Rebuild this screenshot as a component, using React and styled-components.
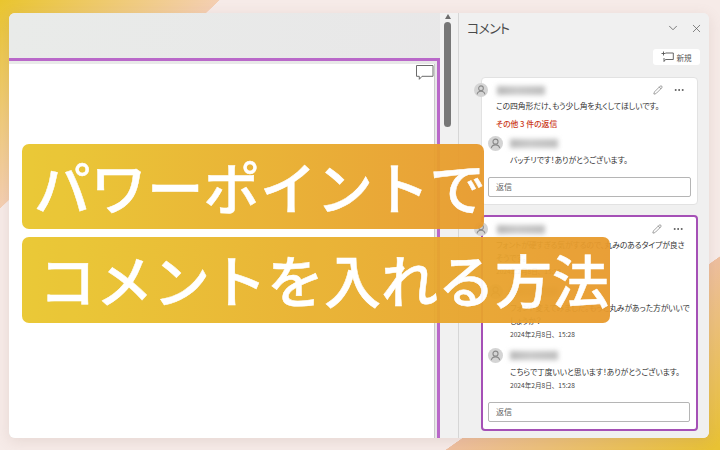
import React from "react";
import styled, { createGlobalStyle } from "styled-components";
import { ChevronDown, Ellipsis, Pencil, X } from "lucide-react";

const GlobalStyle = createGlobalStyle`
  * { box-sizing: border-box; }
  html, body { margin: 0; height: 100%; }
  body {
    overflow: hidden;
    font-family: "Noto Sans CJK JP", "Noto Sans", sans-serif;
    background:
      linear-gradient(136.5deg, #e9c52e 0, #f4cfb2 151px, transparent 151.5px),
      linear-gradient(324.8deg, #e8c231 0, #eebf9f 158px, transparent 158.5px),
      #f6ebe8;
  }
`;

const Page = styled.div`
  width: 720px;
  height: 450px;
  padding: 13px 11px 12px 9px;
`;

const Window = styled.div`
  position: relative;
  height: 100%;
  display: flex;
  border-radius: 6px;
  background: #f0f0f0;
  box-shadow: 0 3px 14px rgba(150, 110, 100, 0.16);
`;

const SlideArea = styled.div`
  width: 431px;
  display: flex;
  padding-top: 45px;
  border-radius: 6px 0 0 6px;
  background: linear-gradient(100deg, #e9ebe9, #e8e7e8);
`;

const SlideFrame = styled.div`
  flex: 1;
  display: flex;
  padding: 3px 2px 0 0;
  border-top: 3px solid #b968c9;
  border-right: 3px solid #b968c9;
`;

const SlideSheet = styled.div`
  flex: 1;
  display: flex;
  justify-content: flex-end;
  align-items: flex-start;
  padding-top: 1px;
  background: #fff;
  border-right: 1px solid #c9c9c9;
  border-radius: 0 0 0 6px;
`;

const ScrollRail = styled.div`
  width: 18px;
  display: flex;
  flex-direction: column;
  align-items: center;
  padding: 1px 3px 0 0;
  background: #f1f1f1;
`;

const ScrollArrow = styled.div`
  width: 0;
  height: 0;
  margin-bottom: 3px;
  border-left: 3.5px solid transparent;
  border-right: 3.5px solid transparent;
  border-bottom: 5px solid #6d6d6d;
`;

const ScrollThumb = styled.div`
  width: 7px;
  height: 105px;
  border-radius: 4px;
  background: #777;
`;

const CommentPane = styled.aside`
  flex: 1;
  display: flex;
  flex-direction: column;
  padding: 0 11px 0 8px;
  border-left: 1px solid #d6d6d6;
  border-radius: 0 6px 6px 0;
  background: #f0f0f0;
`;

const PaneHeader = styled.header`
  flex: none;
  height: 30px;
  margin-right: -5px;
  display: flex;
  align-items: center;
  gap: 10px;
  color: #555;
`;

const PaneTitle = styled.h2`
  flex: 1;
  margin: 0;
  font-size: 13px;
  font-weight: 400;
  line-height: 30px;
  letter-spacing: -0.8px;
  color: #4a4a4a;
  font-feature-settings: "palt";
`;

const PaneToolbar = styled.div`
  flex: none;
  height: 34px;
  margin-right: -2px;
  display: flex;
  justify-content: flex-end;
  align-items: flex-start;
  padding-top: 6px;
`;

const NewButton = styled.button`
  width: 47px;
  height: 16px;
  display: flex;
  align-items: center;
  justify-content: center;
  gap: 2px;
  padding: 0;
  border: 0;
  border-radius: 3px;
  background: #fff;
  font: 400 7.6px "Noto Sans CJK JP", sans-serif;
  color: #555;
`;

const Thread = styled.section`
  flex: none;
  margin: 0 0 10px 14px;
  width: 217px;
  background: #fff;
  border-radius: 4px;
  border: ${({ $selected }) => ($selected ? "2px solid #a550b6" : "1px solid #e2e2e2")};
  padding: 5px 6px 7px ${({ $selected }) => ($selected ? "5px" : "6px")};
`;

const Head = styled.div`
  display: flex;
  align-items: center;
  margin-left: ${({ $reply }) => ($reply ? "0" : "-14px")};
  margin-top: ${({ $gap }) => $gap || 0}px;
`;

const Avatar = styled.span`
  display: flex;
  flex: none;
  width: ${({ $reply }) => ($reply ? "15px" : "14px")};
  height: ${({ $reply }) => ($reply ? "15px" : "14px")};
  border-radius: 50%;
  background: #d4d4d4;
`;

const BlurName = styled.span`
  width: 48px;
  height: 9px;
  margin-left: ${({ $reply }) => ($reply ? "7px" : "9px")};
  background: linear-gradient(90deg, #b8b8b8, #cacaca 40%, #bebebe);
  filter: blur(2.5px);
`;

const Actions = styled.span`
  margin-left: auto;
  margin-right: 6px;
  display: flex;
  align-items: center;
  gap: 10px;
  color: #555;
`;

const Body = styled.p`
  margin: 2px ${({ $reply }) => ($reply ? "-2px" : "2px")} 0 ${({ $reply }) => ($reply ? "22px" : "8px")};
  font-size: 7.8px;
  line-height: 13px;
  letter-spacing: -0.08px;
  color: #333;
  font-feature-settings: "palt";
`;

const MoreLink = styled.div`
  margin: 5px 0 0 8px;
  font-size: 7.8px;
  line-height: 13px;
  font-weight: 500;
  color: #cb3b1c;
  font-feature-settings: "palt";
`;

const Stamp = styled.div`
  margin: 2px 0 0 ${({ $reply }) => ($reply ? "22px" : "8px")};
  font-size: 6.6px;
  line-height: 11px;
  color: #444;
`;

const ReplyBox = styled.div`
  height: 20px;
  margin-top: 11px;
  padding-left: 7px;
  border: 1px solid #b5b5b5;
  border-radius: 2px;
  font-size: 8px;
  line-height: 18px;
  color: #666;
`;

const Banners = styled.div`
  position: absolute;
  left: 13px;
  top: 131px;
  display: flex;
  flex-direction: column;
  align-items: flex-start;
  gap: 8px;
`;

const Banner = styled.h1`
  margin: 0;
  display: flex;
  align-items: center;
  height: ${({ $wide }) => ($wide ? "86px" : "85px")};
  padding: ${({ $wide }) => ($wide ? "0 0 3px 17px" : "0 0 3px 12px")};
  width: ${({ $wide }) => ($wide ? "588px" : "462px")};
  border-radius: 7px;
  background: linear-gradient(90deg, #e9c72d, #e89a2d);
  opacity: 0.95;
  color: #fff;
  font-size: ${({ $wide }) => ($wide ? "57px" : "56.5px")};
  line-height: 1;
  font-weight: 500;
  -webkit-text-stroke: 0.5px #fff;
  white-space: nowrap;
`;

function UserGlyph() {
  return (
    <svg viewBox="0 0 16 16" fill="none" stroke="#8a8a8a" strokeWidth="1.2">
      <circle cx="8" cy="6" r="2.7" />
      <path d="M3.6 13c.3-2.4 2-3.6 4.4-3.6s4.100 1.200 4.400 3.600" />
    </svg>
  );
}

function CommentMarker() {
  return (
    <svg width="18" height="16" viewBox="0 0 18 16" fill="#fff" stroke="#6b6b6b" strokeWidth="1">
      <path d="M.5.500h16.500v10.800H6l-2.700 3v-3H.500z" />
    </svg>
  );
}

function NewCommentGlyph() {
  return (
    <svg width="13" height="12" viewBox="0 0 13 12" fill="none" stroke="#555" strokeWidth="0.9">
      <path d="M4.500 2h7.800v6.500H4.500L3 10.500V7M2.500 .5v4M.5 2.500h4" />
    </svg>
  );
}

function CommentHead({ reply, actions }) {
  return (
    <Head $reply={reply} $gap={reply ? reply : 0}>
      <Avatar $reply={reply}>
        <UserGlyph />
      </Avatar>
      <BlurName $reply={reply} />
      {actions && (
        <Actions>
          <Pencil size={10} strokeWidth={1.3} />
          <Ellipsis size={12} strokeWidth={2} />
        </Actions>
      )}
    </Head>
  );
}

export default function App() {
  return (
    <>
      <GlobalStyle />
      <Page>
        <Window>
          <SlideArea>
            <SlideFrame>
              <SlideSheet>
                <CommentMarker />
              </SlideSheet>
            </SlideFrame>
          </SlideArea>
          <ScrollRail>
            <ScrollArrow />
            <ScrollThumb />
          </ScrollRail>
          <CommentPane>
            <PaneHeader>
              <PaneTitle>コメント</PaneTitle>
              <ChevronDown size={14} strokeWidth={1.3} />
              <X size={13} strokeWidth={1.3} />
            </PaneHeader>
            <PaneToolbar>
              <NewButton>
                <NewCommentGlyph />
                新規
              </NewButton>
            </PaneToolbar>
            <Thread>
              <CommentHead actions />
              <Body>この四角形だけ、もう少し角を丸くしてほしいです。</Body>
              <MoreLink>その他 3 件の返信</MoreLink>
              <CommentHead reply={6} />
              <Body $reply>バッチリです！ありがとうございます。</Body>
              <ReplyBox>返信</ReplyBox>
            </Thread>
            <Thread $selected>
              <CommentHead actions />
              <Body>フォントが硬すぎる気がするので、丸みのあるタイプが良さそうです。</Body>
              <Stamp>2024年2月8日、15:28</Stamp>
              <CommentHead reply={7} />
              <Body $reply>フォント変えてみました。もっと丸みがあった方がいいでしょうか？</Body>
              <Stamp $reply>2024年2月8日、15:28</Stamp>
              <CommentHead reply={8} />
              <Body $reply>こちらで丁度いいと思います！ありがとうございます。</Body>
              <Stamp $reply>2024年2月8日、15:28</Stamp>
              <ReplyBox>返信</ReplyBox>
            </Thread>
          </CommentPane>
          <Banners>
            <Banner>パワーポイントで</Banner>
            <Banner $wide>コメントを入れる方法</Banner>
          </Banners>
        </Window>
      </Page>
    </>
  );
}
